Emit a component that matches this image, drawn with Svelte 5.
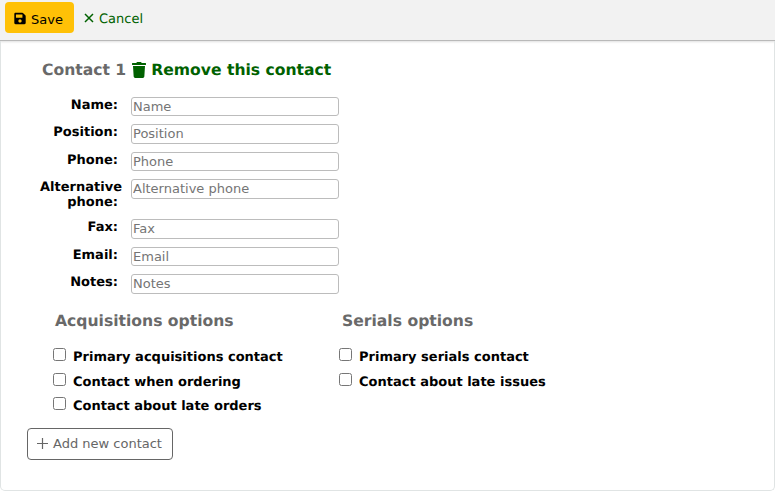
<script>
  const fields = [
    { label: 'Name:', placeholder: 'Name' },
    { label: 'Position:', placeholder: 'Position' },
    { label: 'Phone:', placeholder: 'Phone' },
    { label: 'Alternative phone:', placeholder: 'Alternative phone' },
    { label: 'Fax:', placeholder: 'Fax' },
    { label: 'Email:', placeholder: 'Email' },
    { label: 'Notes:', placeholder: 'Notes' }
  ];
  const acquisitions = ['Primary acquisitions contact', 'Contact when ordering', 'Contact about late orders'];
  const serials = ['Primary serials contact', 'Contact about late issues'];
</script>

<main>
  <nav class="toolbar">
    <button class="save">
      <svg class="save__icon" viewBox="0 0 448 512" width="12" height="13" aria-hidden="true">
        <path d="M433.9 129.9l-83.9-83.9A48 48 0 0 0 316.1 32H48C21.5 32 0 53.5 0 80v352c0 26.5 21.5 48 48 48h352c26.5 0 48-21.5 48-48V163.9a48 48 0 0 0-14.1-34zM224 416c-35.3 0-64-28.7-64-64 0-35.3 28.7-64 64-64s64 28.700 64 64c0 35.300-28.700 64-64 64zm96-304.500V212c0 6.600-5.400 12-12 12H76c-6.600 0-12-5.400-12-12V108c0-6.600 5.400-12 12-12h228.500c3.200 0 6.200 1.300 8.500 3.500l3.500 3.500a12 12 0 0 1 3.500 8.500z" />
      </svg>
      <span>Save</span>
    </button>
    <a class="cancel" href="#cancel">
      <svg viewBox="0 0 10 10" width="10" height="10" aria-hidden="true">
        <path d="M1 1l8 8M9 1l-8 8" stroke="currentColor" stroke-width="1.500" fill="none" />
      </svg>
      <span>Cancel</span>
    </a>
  </nav>

  <section class="panel">
    <h3 class="contact-title">
      <span>Contact 1</span>
      <a href="#remove">
        <svg viewBox="0 0 448 512" width="14" height="16" aria-hidden="true">
          <path d="M432 32H312l-9.400-18.700A24 24 0 0 0 281.100 0H166.800a23.700 23.700 0 0 0-21.400 13.300L136 32H16A16 16 0 0 0 0 48v32a16 16 0 0 0 16 16h416a16 16 0 0 0 16-16V48a16 16 0 0 0-16-16zM53.200 467a48 48 0 0 0 47.900 45h245.800a48 48 0 0 0 47.900-45L416 128H32z" />
        </svg>
        Remove this contact
      </a>
    </h3>

    <div class="fields">
      {#each fields as field}
        <div class="field">
          <label for={field.placeholder}>{field.label}</label>
          <input id={field.placeholder} type="text" placeholder={field.placeholder} />
        </div>
      {/each}
    </div>

    <div class="options">
      <div class="options__col">
        <h4>Acquisitions options</h4>
        {#each acquisitions as item}
          <label class="check"><input type="checkbox" /><span>{item}</span></label>
        {/each}
      </div>
      <div class="options__col">
        <h4>Serials options</h4>
        {#each serials as item}
          <label class="check"><input type="checkbox" /><span>{item}</span></label>
        {/each}
      </div>
    </div>

    <button class="add">
      <svg viewBox="0 0 11 11" width="11" height="11" aria-hidden="true">
        <path d="M5.500 0v11M0 5.500h11" stroke="currentColor" stroke-width="1.200" fill="none" />
      </svg>
      Add new contact
    </button>
  </section>
</main>

<style>
  :global(body) {
    background: #fff;
    font-family: 'DejaVu Sans', sans-serif;
    font-size: 13px;
    text-rendering: geometricPrecision;
  }

  main {
    height: 491px;
    overflow: hidden;
  }

  .toolbar {
    display: flex;
    align-items: center;
    gap: 9px;
    box-sizing: border-box;
    height: 41px;
    padding: 0 5px 6px;
    border-bottom: 1px solid #b9b9b9;
    background: #f2f2f2;
    box-shadow: 0 1px 2px rgba(0, 0, 0, 0.12);
  }

  .toolbar span {
    position: relative;
    top: 1px;
  }

  .save {
    display: flex;
    align-items: center;
    gap: 5px;
    box-sizing: border-box;
    width: 69px;
    height: 31px;
    padding: 2px 9px 0;
    border: 0;
    border-radius: 4px;
    background: #ffc107;
    color: #000;
    font: inherit;
    font-size: 13px;
  }

  .cancel {
    display: flex;
    align-items: center;
    gap: 5px;
    margin-left: 1px;
    padding-top: 2px;
    color: #006100;
    text-decoration: none;
  }

  .panel {
    box-sizing: border-box;
    height: 450px;
    padding-top: 19px;
    border: 1px solid #e0e4e4;
    border-top: 0;
    border-radius: 0 0 5px 5px;
  }

  .contact-title {
    display: flex;
    gap: 5.500px;
    margin: 0 0 16.700px 41px;
    color: #696969;
    font-size: 15.600px;
    font-weight: bold;
    line-height: 20px;
  }

  .contact-title a {
    display: flex;
    align-items: center;
    gap: 5.500px;
    color: #006100;
    fill: #006100;
    text-decoration: none;
  }

  .field {
    display: flex;
    align-items: flex-start;
    margin-left: 39px;
    padding-bottom: 8px;
  }

  .field label {
    box-sizing: border-box;
    width: 78px;
    margin-right: 13px;
    padding: 1px 0 1px;
    font-weight: bold;
    line-height: 15px;
    text-align: right;
  }

  .field input {
    box-sizing: border-box;
    width: 208px;
    height: 19.500px;
    padding: 0 1px;
    border: 1px solid #bcbcbc;
    border-radius: 3px;
    background: #fff;
    font: inherit;
    font-size: 13px;
  }

  .field input::placeholder {
    color: #757575;
  }

  .options {
    display: flex;
    margin: 10.300px 0 0 51px;
  }

  .options__col {
    width: 286px;
  }

  .options__col + .options__col h4 {
    margin-left: 4px;
  }

  h4 {
    margin: 0 0 18.500px 3px;
    color: #696969;
    font-size: 15.600px;
    font-weight: bold;
    line-height: 18px;
  }

  .check {
    display: flex;
    align-items: flex-start;
    height: 24.500px;
    font-weight: bold;
    line-height: 19px;
  }

  .check input {
    width: 13px;
    height: 13px;
    margin: 0 7px 0 1px;
  }

  .add {
    display: flex;
    align-items: center;
    gap: 5px;
    box-sizing: border-box;
    height: 32px;
    margin: 6.500px 0 0 26px;
    padding: 0 10px 2px 9px;
    border: 1px solid #666;
    border-radius: 4px;
    background: #fff;
    color: #666;
    font: inherit;
    font-size: 13px;
  }
</style>
